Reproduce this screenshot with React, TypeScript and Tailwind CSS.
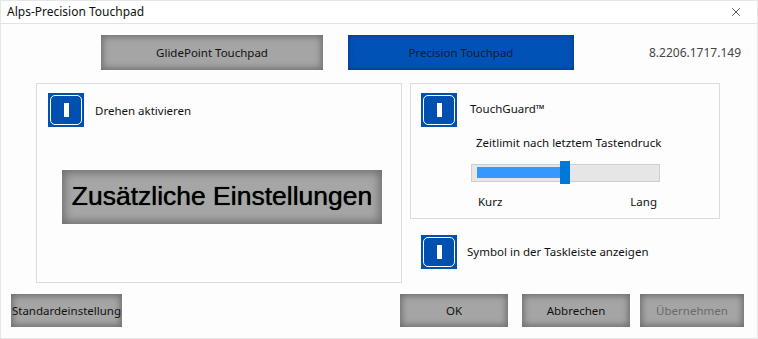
import { X } from 'lucide-react';

const ui = { fontFamily: '"Segoe UI", "Noto Sans", "Open Sans", sans-serif' };

function Toggle({ className }: { className?: string }) {
  return (
    <div className={`flex h-[34px] w-[36px] shrink-0 items-center justify-center bg-[#0050b0] p-[2px] ${className ?? ''}`}>
      <div className="flex h-full w-full items-center justify-center rounded-[5px] border border-white">
        <div className="h-[14px] w-[5px] bg-white" />
      </div>
    </div>
  );
}

function GrayButton({ label, className, disabled }: { label: string; className?: string; disabled?: boolean }) {
  return (
    <button
      className={`flex items-center justify-center whitespace-nowrap bg-[#a5a5a5] text-[11.5px] shadow-[inset_0_0_6px_2px_#6e6e6e] ${disabled ? 'text-[#6a6a6a]' : 'text-[#111]'} ${className ?? ''}`}
    >
      {label}
    </button>
  );
}

export default function App() {
  return (
    <div className="flex h-[339px] w-[758px] flex-col border border-[#e6e6e6] bg-[#fdfdfd] text-[11.5px] text-[#111]" style={ui}>
      <div className="flex h-[23px] shrink-0 items-center justify-between border-b border-[#e3e3e3] bg-white pl-[6px] pr-[14px] text-[12px]">
        <span>Alps-Precision Touchpad</span>
        <X className="h-[14px] w-[14px] text-[#222]" strokeWidth={1.3} />
      </div>

      <div className="mt-[11px] flex h-[35px] items-center">
        <GrayButton label="GlidePoint Touchpad" className="ml-[100px] h-[35px] w-[222px]" />
        <button className="ml-[25px] flex h-[35px] w-[226px] items-center justify-center bg-[#0052b6] text-[11.5px] text-[#141c30] shadow-[inset_0_0_5px_1px_#003e8f]">
          Precision Touchpad
        </button>
        <span className="ml-[75px] text-[12px] text-[#444]">8.2206.1717.149</span>
      </div>

      <div className="mt-[13px] flex">
        <div className="ml-[35px] flex h-[200px] w-[366px] flex-col border border-[#dcdcdc]">
          <div className="mt-[9px] flex items-center">
            <Toggle className="ml-[11px]" />
            <span className="ml-[11px] mt-[2px]">Drehen aktivieren</span>
          </div>
          <button
            className="ml-[25px] mt-[43px] flex h-[54px] w-[320px] items-center justify-center bg-[#a6a6a6] text-[26.5px] text-black shadow-[inset_0_0_8px_3px_#707070] [text-shadow:0_0_0.8px_#000]"
            style={{ fontFamily: '"Liberation Sans", Arial, sans-serif' }}
          >
            Zusätzliche Einstellungen
          </button>
        </div>

        <div className="ml-[8px] flex w-[310px] flex-col">
          <div className="flex h-[136px] flex-col border border-[#dcdcdc]">
            <div className="mt-[9px] flex items-center">
              <Toggle className="ml-[10px]" />
              <span className="ml-[13px] mb-[2px]">TouchGuard™</span>
            </div>
            <span className="ml-[65px] mt-[7px]">Zeitlimit nach letztem Tastendruck</span>
            <div className="relative ml-[60px] mt-[13px] h-[18px] w-[189px] border border-[#cfcfcf] bg-[#e6e6e6]">
              <div className="absolute left-[5px] top-[2px] h-[11px] w-[85px] bg-[#3399ff]" />
              <div className="absolute left-[88px] top-[-4px] h-[23px] w-[10px] bg-[#0078d7]" />
            </div>
            <div className="ml-[67px] mr-[62px] mt-[11px] flex justify-between">
              <span>Kurz</span>
              <span>Lang</span>
            </div>
          </div>
          <div className="mt-[16px] flex items-center">
            <Toggle className="ml-[11px]" />
            <span className="ml-[10px]">Symbol in der Taskleiste anzeigen</span>
          </div>
        </div>
      </div>

      <div className="mt-[11px] flex">
        <GrayButton label="Standardeinstellung" className="ml-[10px] h-[33px] w-[111px]" />
        <GrayButton label="OK" className="ml-[278px] h-[33px] w-[108px]" />
        <GrayButton label="Abbrechen" className="ml-[14px] h-[33px] w-[108px]" />
        <GrayButton label="Übernehmen" disabled className="ml-[10px] h-[33px] w-[104px]" />
      </div>
    </div>
  );
}
